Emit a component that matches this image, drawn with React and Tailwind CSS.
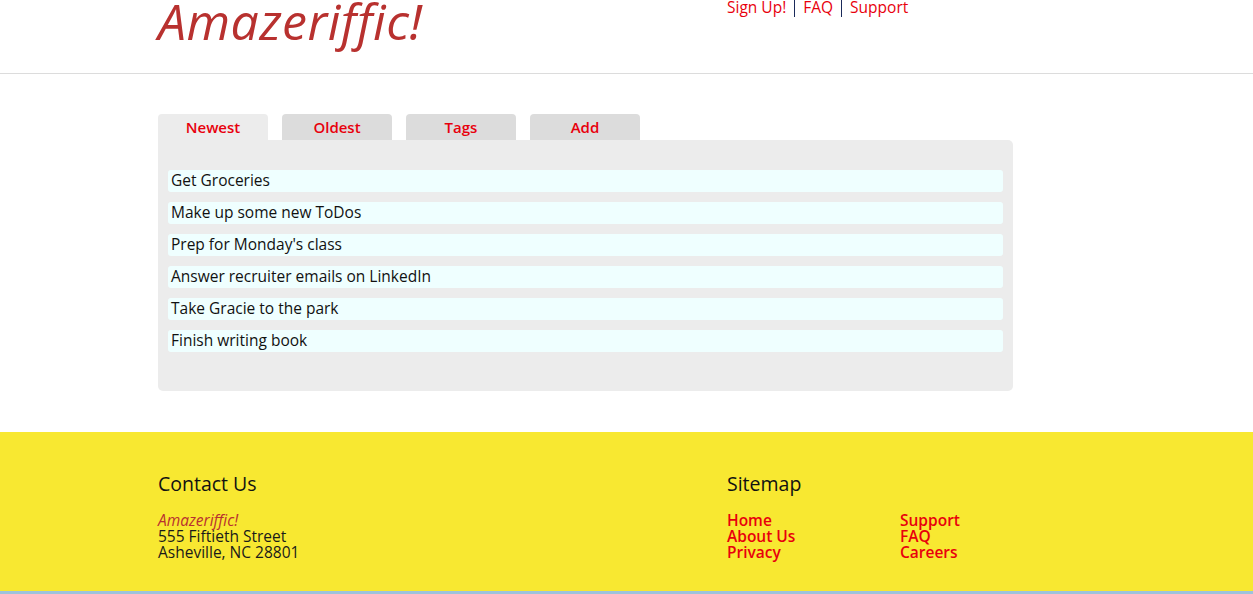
const tabs = ["Newest", "Oldest", "Tags", "Add"];

const todos = [
  "Get Groceries",
  "Make up some new ToDos",
  "Prep for Monday's class",
  "Answer recruiter emails on LinkedIn",
  "Take Gracie to the park",
  "Finish writing book",
];

function Pipe() {
  return <span className="w-px h-[18px] mx-[8px] bg-[#1a2a5a]" />;
}

function Header() {
  return (
    <header className="h-[74px] border-b border-[#dcdcdc]">
      <div className="flex w-[1095px] ml-[158px]">
        <h1 className="w-[569px] -mt-[4px] text-[50px] leading-[50px] italic text-[#b8312f] font-['Open_Sans',sans-serif] tracking-[0.5px]">
          Amazeriffic!
        </h1>
        <nav className="flex items-start text-[15.5px] leading-[16px] -mt-[1px] text-[#e8000d]">
          <a href="#">Sign Up!</a>
          <Pipe />
          <a href="#">FAQ</a>
          <Pipe />
          <a href="#">Support</a>
        </nav>
      </div>
    </header>
  );
}

function Main() {
  return (
    <main className="ml-[158px] w-[855px] mt-[40px]">
      <div className="flex gap-[14px]">
        {tabs.map((t, i) => (
          <a
            key={t}
            href="#"
            className={`w-[110px] h-[26px] flex items-center justify-center rounded-t-[4px] text-[15px] font-semibold text-[#e8000d] ${
              i === 0 ? "bg-[#ececec]" : "bg-[#dcdcdc]"
            }`}
          >
            {t}
          </a>
        ))}
      </div>
      <div className="bg-[#ececec] rounded-b-[5px] rounded-tr-[5px] px-[10px] pt-[30px] pb-[39px] flex flex-col gap-[10px]">
        {todos.map((t) => (
          <div key={t} className="h-[22px] bg-[#efffff] rounded-[3px] pl-[3px] text-[15.5px] leading-[21px] text-[#111]">
            {t}
          </div>
        ))}
      </div>
    </main>
  );
}

function Footer() {
  return (
    <footer className="mt-[41px] h-[162px] bg-[#f8e831] border-b-[3px] border-[#9ec3dc]">
      <div className="ml-[158px] flex pt-[40px]">
        <div className="w-[569px]">
          <h3 className="text-[19.5px] leading-[24px] text-[#111]">Contact Us</h3>
          <div className="mt-[16px] text-[15.5px] leading-[16px] text-[#1a1a1a]">
            <div className="italic text-[#b8312f]">Amazeriffic!</div>
            <div>555 Fiftieth Street</div>
            <div>Asheville, NC 28801</div>
          </div>
        </div>
        <div>
          <h3 className="text-[19.5px] leading-[24px] text-[#111]">Sitemap</h3>
          <div className="mt-[16px] flex text-[15.5px] leading-[16px] font-semibold text-[#e8000d]">
            <div className="w-[173px] flex flex-col">
              <a href="#">Home</a>
              <a href="#">About Us</a>
              <a href="#">Privacy</a>
            </div>
            <div className="flex flex-col">
              <a href="#">Support</a>
              <a href="#">FAQ</a>
              <a href="#">Careers</a>
            </div>
          </div>
        </div>
      </div>
    </footer>
  );
}

export default function App() {
  return (
    <div className="w-[1253px] h-[594px] overflow-hidden bg-white font-['Open_Sans',sans-serif]">
      <Header />
      <Main />
      <Footer />
    </div>
  );
}
